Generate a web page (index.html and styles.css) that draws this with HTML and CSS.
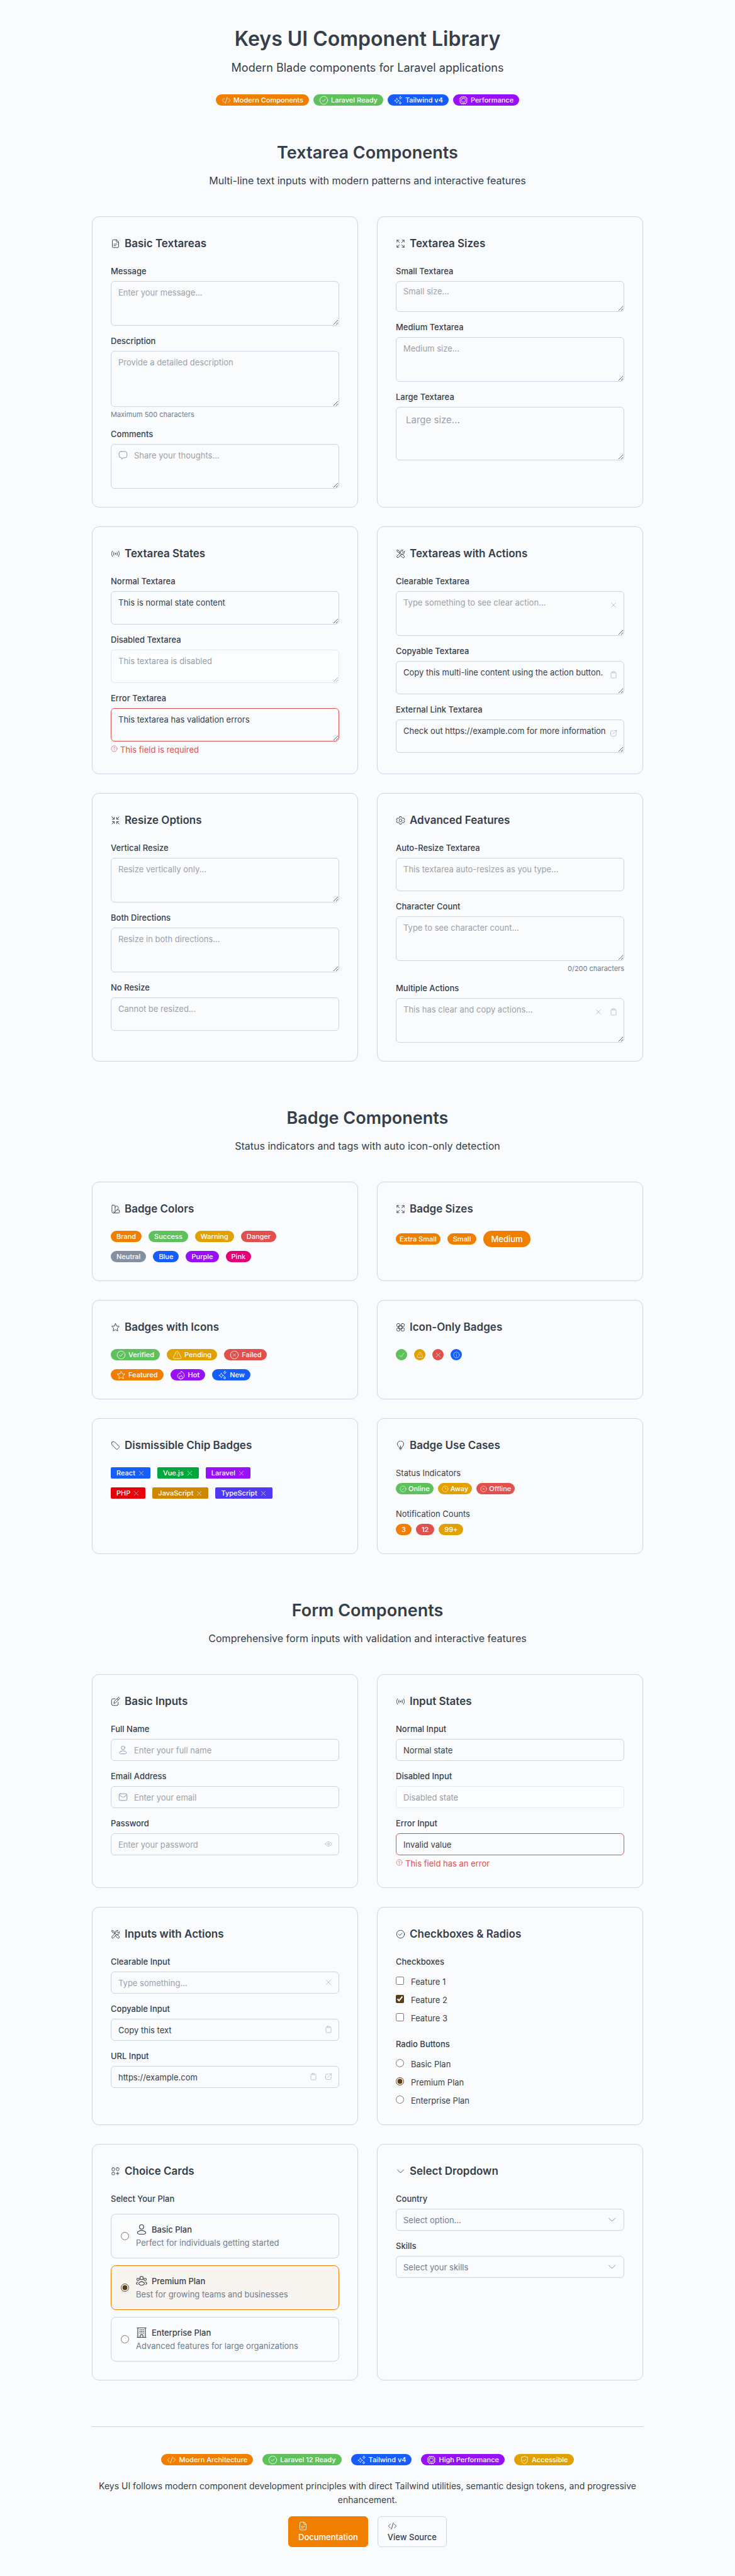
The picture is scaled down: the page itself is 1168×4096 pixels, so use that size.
FILE: index.html
```html
<!DOCTYPE html>
<html lang="en">
<head>
<meta charset="utf-8">
<meta name="viewport" content="width=device-width, initial-scale=1">
<title>Keys UI Component Library</title>
<link rel="stylesheet" href="styles.css">
</head>
<body>
<svg class="sprite" aria-hidden="true">
  <symbol id="code" viewBox="0 0 24 24"><path d="M17 7l2 2c1.500 1.500 3 2.300 3 3s-1.500 1.500-3 3l-2 2M7 7L5 9c-1.500 1.500-3 2.300-3 3s1.500 1.500 3 3l2 2M14.500 4l-5 16"/></symbol>
  <symbol id="check-circle" viewBox="0 0 24 24"><circle cx="12" cy="12" r="10"/><path d="M8 12.500l2.500 2.500L16 9"/></symbol>
  <symbol id="x-circle" viewBox="0 0 24 24"><circle cx="12" cy="12" r="10"/><path d="M14.500 9.500l-5 5M9.500 9.500l5 5"/></symbol>
  <symbol id="clock" viewBox="0 0 24 24"><circle cx="12" cy="12" r="10"/><path d="M12 7v5h4"/></symbol>
  <symbol id="info" viewBox="0 0 24 24"><circle cx="12" cy="12" r="10"/><path d="M12 17v-5.500h-1M12 8v.1"/></symbol>
  <symbol id="help" viewBox="0 0 24 24"><circle cx="12" cy="12" r="10"/><path d="M9.500 9.500a2.500 2.500 0 1 1 3.900 2c-.8.600-1.400 1.100-1.400 2M12 17v.1"/></symbol>
  <symbol id="sparkles" viewBox="0 0 24 24"><path d="M9 7c1 3.600 2.400 5 6 6-3.600 1-5 2.400-6 6-1-3.600-2.400-5-6-6 3.600-1 5-2.400 6-6ZM18 2c.5 2 1.500 3 3.500 3.500C19.500 6 18.500 7 18 9c-.5-2-1.500-3-3.500-3.500C16.500 5 17.500 4 18 2ZM17.500 16c.4 1.800 1.200 2.600 3 3-1.800.4-2.600 1.200-3 3-.4-1.800-1.200-2.600-3-3 1.800-.4 2.600-1.200 3-3Z"/></symbol>
  <symbol id="cpu" viewBox="0 0 24 24"><rect x="4" y="4" width="16" height="16" rx="3"/><rect x="7.500" y="7.500" width="9" height="9" rx="1"/><path d="M8 2v2M12 2v2M16 2v2M8 20v2M12 20v2M16 20v2M2 8h2M2 12h2M2 16h2M20 8h2M20 12h2M20 16h2"/></symbol>
  <symbol id="shield" viewBox="0 0 24 24"><path d="M12 2.500c2.500 1.800 5 2.500 8 2.500.8 8-1.500 14-8 17C5.500 19 3.200 13 4 5c3 0 5.500-.7 8-2.500ZM8.500 12.500l2.500 2.500 4.500-5.500"/></symbol>
  <symbol id="file" viewBox="0 0 24 24"><path d="M14 2H7a3 3 0 0 0-3 3v14a3 3 0 0 0 3 3h10a3 3 0 0 0 3-3V8ZM14 2v4a2 2 0 0 0 2 2h4M8 17h5M8 13h8"/></symbol>
  <symbol id="expand" viewBox="0 0 24 24"><path d="M3 8V3h5M3 3l6 6M16 3h5v5M21 3l-6 6M3 16v5h5M3 21l6-6M16 21h5v-5M21 21l-6-6"/></symbol>
  <symbol id="shrink" viewBox="0 0 24 24"><path d="M9 4v5H4M9 9L3 3M15 4v5h5M15 9l6-6M9 20v-5H4M9 15l-6 6M15 20v-5h5M15 15l6 6"/></symbol>
  <symbol id="comment" viewBox="0 0 24 24"><path d="M7 3h10a5 5 0 0 1 5 5v6a5 5 0 0 1-5 5h-4l-4.500 3.500V19H7a5 5 0 0 1-5-5V8a5 5 0 0 1 5-5Z"/></symbol>
  <symbol id="signal" viewBox="0 0 24 24"><circle cx="12" cy="12" r="1.500"/><path d="M8 8c-1.300 2.500-1.300 5.500 0 8M16 8c1.300 2.500 1.300 5.500 0 8M4.500 5c-3 4-3 10 0 14M19.500 5c3 4 3 10 0 14"/></symbol>
  <symbol id="tools" viewBox="0 0 24 24"><path d="M2.500 3.500l2-1.500 4 3 .5 2.500 3 3M2.500 3.500L5 8l2.800.8 3 3M13.500 13.500l1.500-1.500 6 5.500a2.700 2.700 0 0 1-4 4L11.500 15.500l2-2ZM21.500 6L18 9l-3-3 3-3.500a5.500 5.500 0 0 0-6.500 7L3 17.800A2.600 2.600 0 0 0 6.500 21.500L14.500 13a5.500 5.500 0 0 0 7-7Z"/></symbol>
  <symbol id="cog" viewBox="0 0 24 24"><circle cx="12" cy="12" r="3.500"/><path d="M10 2.500h4l1 3 2.500 1.400 3.100-.6 2 3.500L20.500 12l2.100 2.200-2 3.500-3.100-.6L15 18.500l-1 3h-4l-1-3-2.500-1.400-3.100.6-2-3.500L3.500 12 1.400 9.800l2-3.500 3.100.6L9 5.500Z"/></symbol>
  <symbol id="swatch" viewBox="0 0 24 24"><path d="M5 2h4a2 2 0 0 1 2 2v14a4 4 0 0 1-8 0V4a2 2 0 0 1 2-2ZM11 7l3-2.500a2 2 0 0 1 2.800.2l2.500 3.200a2 2 0 0 1-.2 2.700L10 20M7 22h13a2 2 0 0 0 2-2v-4a2 2 0 0 0-2-2h-4M7 18v.1"/></symbol>
  <symbol id="star" viewBox="0 0 24 24"><path d="M12 2.500l2.900 6.200 6.600.9-4.800 4.700 1.200 6.900L12 18l-5.900 3.200 1.200-6.900L2.500 9.600l6.600-.9Z"/></symbol>
  <symbol id="grid" viewBox="0 0 24 24"><rect x="2.500" y="2.500" width="8" height="8" rx="3"/><rect x="13.500" y="2.500" width="8" height="8" rx="3"/><rect x="2.500" y="13.500" width="8" height="8" rx="3"/><rect x="13.500" y="13.500" width="8" height="8" rx="3"/><path d="M8 8h8v8H8Z"/></symbol>
  <symbol id="grid-plus" viewBox="0 0 24 24"><rect x="3" y="3" width="7" height="7" rx="2.500"/><rect x="14" y="3" width="7" height="7" rx="2.500"/><rect x="3" y="14" width="7" height="7" rx="2.500"/><path d="M17.500 14v7M14 17.500h7"/></symbol>
  <symbol id="tag" viewBox="0 0 24 24"><path d="M3 3.500C4.500 2 9 1.800 10.500 3.300l10 10c1.700 1.700 1.700 2.700 0 4.400l-2.800 2.800c-1.700 1.700-2.700 1.700-4.400 0l-10-10C1.800 9 1.700 5 3 3.500Z"/></symbol>
  <symbol id="bulb" viewBox="0 0 24 24"><path d="M8.500 17c-.3-1.500-1-2-2.200-3.200a8 8 0 1 1 11.400 0C16.500 15 15.800 15.500 15.500 17ZM9.500 20h5M11 22.500h2M12 17v-4"/></symbol>
  <symbol id="alert" viewBox="0 0 24 24"><path d="M10.200 3.500c.8-1.300 2.800-1.300 3.600 0l8 14.200c.8 1.500-.1 3.300-1.900 3.300H4.100c-1.800 0-2.700-1.800-1.900-3.300ZM12 9v4M12 16.500v.1"/></symbol>
  <symbol id="fire" viewBox="0 0 24 24"><path d="M12 22a8.500 8.500 0 0 0 8.500-8.500C20.500 9 18 5 12.500 2c.3 3-.5 5-2.500 6.500C9.500 7.500 8.800 6.800 8 6.500 7 9 3.500 10 3.500 14A8.500 8.500 0 0 0 12 22ZM12 22a4 4 0 0 1-4-4c0-2 1-3 2-4 .5 1 1 1.500 2 1.500 1-.5 1.500-1.500 1.500-3 2 1.500 2.500 3.500 2.500 5.500a4 4 0 0 1-4 4Z"/></symbol>
  <symbol id="check" viewBox="0 0 24 24"><path d="M4 13.500L9 19 20 5"/></symbol>
  <symbol id="x" viewBox="0 0 24 24"><path d="M19 5L5 19M5 5l14 14"/></symbol>
  <symbol id="clipboard" viewBox="0 0 24 24"><path d="M8 4H7a3 3 0 0 0-3 3v12a3 3 0 0 0 3 3h10a3 3 0 0 0 3-3V7a3 3 0 0 0-3-3h-1"/><rect x="8" y="2" width="8" height="4" rx="1.500"/></symbol>
  <symbol id="external" viewBox="0 0 24 24"><path d="M11 4H7a4 4 0 0 0-4 4v9a4 4 0 0 0 4 4h9a4 4 0 0 0 4-4v-4M9.500 14.500L21 3M15 3h6v6"/></symbol>
  <symbol id="edit" viewBox="0 0 24 24"><path d="M11 5H6a4 4 0 0 0-4 4v9a4 4 0 0 0 4 4h9a4 4 0 0 0 4-4v-4M8 16l1-4.500 9.500-9a2 2 0 0 1 3 3L12.500 15ZM16 5l3 3"/></symbol>
  <symbol id="user" viewBox="0 0 24 24"><circle cx="12" cy="6.500" r="4.500"/><path d="M6.600 15.500c-1.400.8-5.100 2.500-2.900 4.700C4.800 21.200 6 22 7.600 22h8.800c1.600 0 2.800-.8 3.900-1.800 2.200-2.200-1.500-3.900-2.900-4.700a10.500 10.500 0 0 0-10.800 0Z"/></symbol>
  <symbol id="users" viewBox="0 0 24 24"><circle cx="12" cy="5.500" r="3.500"/><circle cx="4.500" cy="8.500" r="2.500"/><circle cx="19.500" cy="8.500" r="2.500"/><path d="M8 14.500c-1 .7-3 2-1.500 4 1.500 2.300 3 2.500 5.500 2.500s4-.2 5.500-2.500c1.500-2-.5-3.300-1.500-4-2.300-1.600-5.700-1.600-8 0ZM4 14c-2 .5-3 2-3 3 0 1.200 1 2 2.500 2M20 14c2 .5 3 2 3 3 0 1.200-1 2-2.500 2"/></symbol>
  <symbol id="building" viewBox="0 0 24 24"><path d="M2.500 22h19M4 22V2M20 22V2M2.500 2h19M9 22v-3.500a2 2 0 0 1 2-2h2a2 2 0 0 1 2 2V22M8 6h1.500M11.500 6h1.500M15 6h1.500M8 9.500h1.500M11.500 9.500h1.500M15 9.500h1.500M8 13h1.500M11.500 13h1.500M15 13h1.500"/></symbol>
  <symbol id="mail" viewBox="0 0 24 24"><rect x="2" y="3.500" width="20" height="17" rx="3"/><path d="M2.500 6.500l6.500 4.500c2.500 1.500 3.500 1.500 6 0l6.500-4.500"/></symbol>
  <symbol id="eye" viewBox="0 0 24 24"><path d="M2 12c2-4 5.500-7 10-7s8 3 10 7c-2 4-5.500 7-10 7s-8-3-10-7Z"/><circle cx="12" cy="12" r="3"/></symbol>
  <symbol id="chevron" viewBox="0 0 24 24"><path d="M4 8l8 8 8-8"/></symbol>
</svg>

<main class="page">
  <header class="hero">
    <h1>Keys UI Component Library</h1>
    <p>Modern Blade components for Laravel applications</p>
    <div class="badges tight">
      <span class="badge orange"><svg class="icon"><use href="#code"/></svg>Modern Components</span>
      <span class="badge green"><svg class="icon"><use href="#check-circle"/></svg>Laravel Ready</span>
      <span class="badge blue"><svg class="icon"><use href="#sparkles"/></svg>Tailwind v4</span>
      <span class="badge purple"><svg class="icon"><use href="#cpu"/></svg>Performance</span>
    </div>
  </header>

  <section>
    <h2>Textarea Components</h2>
    <p class="lead">Multi-line text inputs with modern patterns and interactive features</p>
    <div class="grid">
      <article class="card">
        <h3><svg class="icon"><use href="#file"/></svg>Basic Textareas</h3>
        <div class="stack">
          <div class="field"><label for="message">Message</label><textarea id="message" rows="3" placeholder="Enter your message..."></textarea></div>
          <div class="field"><label for="description">Description</label><textarea id="description" rows="4" placeholder="Provide a detailed description"></textarea><p class="hint">Maximum 500 characters</p></div>
          <div class="field"><label for="comments">Comments</label><div class="control"><svg class="icon lead-icon"><use href="#comment"/></svg><textarea id="comments" class="has-icon" rows="3" placeholder="Share your thoughts..."></textarea></div></div>
        </div>
      </article>
      <article class="card">
        <h3><svg class="icon"><use href="#expand"/></svg>Textarea Sizes</h3>
        <div class="stack">
          <div class="field"><label for="ta-small">Small Textarea</label><textarea id="ta-small" class="small" rows="2" placeholder="Small size..."></textarea></div>
          <div class="field"><label for="ta-medium">Medium Textarea</label><textarea id="ta-medium" rows="3" placeholder="Medium size..."></textarea></div>
          <div class="field"><label for="ta-large">Large Textarea</label><textarea id="ta-large" class="large" rows="3" placeholder="Large size..."></textarea></div>
        </div>
      </article>
      <article class="card">
        <h3><svg class="icon"><use href="#signal"/></svg>Textarea States</h3>
        <div class="stack">
          <div class="field"><label for="ta-normal">Normal Textarea</label><textarea id="ta-normal" rows="2">This is normal state content</textarea></div>
          <div class="field"><label for="ta-disabled">Disabled Textarea</label><textarea id="ta-disabled" rows="2" disabled>This textarea is disabled</textarea></div>
          <div class="field"><label for="ta-error">Error Textarea</label><textarea id="ta-error" class="invalid" rows="2">This textarea has validation errors</textarea><p class="error"><svg class="icon"><use href="#help"/></svg>This field is required</p></div>
        </div>
      </article>
      <article class="card">
        <h3><svg class="icon"><use href="#tools"/></svg>Textareas with Actions</h3>
        <div class="stack">
          <div class="field"><label for="ta-clear">Clearable Textarea</label><div class="control"><textarea id="ta-clear" class="has-actions" rows="3" placeholder="Type something to see clear action..."></textarea><div class="actions"><button type="button" aria-label="Clear"><svg class="icon"><use href="#x"/></svg></button></div></div></div>
          <div class="field"><label for="ta-copy">Copyable Textarea</label><div class="control"><textarea id="ta-copy" class="has-actions" rows="2">Copy this multi-line content using the action button.</textarea><div class="actions"><button type="button" aria-label="Copy"><svg class="icon"><use href="#clipboard"/></svg></button></div></div></div>
          <div class="field"><label for="ta-link">External Link Textarea</label><div class="control"><textarea id="ta-link" class="has-actions" rows="2">Check out https://example.com for more information</textarea><div class="actions"><button type="button" aria-label="Open link"><svg class="icon"><use href="#external"/></svg></button></div></div></div>
        </div>
      </article>
      <article class="card">
        <h3><svg class="icon"><use href="#shrink"/></svg>Resize Options</h3>
        <div class="stack">
          <div class="field"><label for="ta-vertical">Vertical Resize</label><textarea id="ta-vertical" rows="3" placeholder="Resize vertically only..."></textarea></div>
          <div class="field"><label for="ta-both">Both Directions</label><textarea id="ta-both" class="resize-both" rows="3" placeholder="Resize in both directions..."></textarea></div>
          <div class="field"><label for="ta-none">No Resize</label><textarea id="ta-none" class="resize-none" rows="2" placeholder="Cannot be resized..."></textarea></div>
        </div>
      </article>
      <article class="card">
        <h3><svg class="icon"><use href="#cog"/></svg>Advanced Features</h3>
        <div class="stack">
          <div class="field"><label for="ta-auto">Auto-Resize Textarea</label><textarea id="ta-auto" class="resize-none" rows="2" placeholder="This textarea auto-resizes as you type..."></textarea></div>
          <div class="field"><label for="ta-count">Character Count</label><textarea id="ta-count" rows="3" placeholder="Type to see character count..."></textarea><p class="hint end">0/200 characters</p></div>
          <div class="field"><label for="ta-multi">Multiple Actions</label><div class="control"><textarea id="ta-multi" class="has-actions" rows="3" placeholder="This has clear and copy actions..."></textarea><div class="actions"><button type="button" aria-label="Clear"><svg class="icon"><use href="#x"/></svg></button><button type="button" aria-label="Copy"><svg class="icon"><use href="#clipboard"/></svg></button></div></div></div>
        </div>
      </article>
    </div>
  </section>

  <section>
    <h2>Badge Components</h2>
    <p class="lead">Status indicators and tags with auto icon-only detection</p>
    <div class="grid">
      <article class="card">
        <h3><svg class="icon"><use href="#swatch"/></svg>Badge Colors</h3>
        <div class="badge-rows">
          <div class="badges"><span class="badge orange">Brand</span><span class="badge green">Success</span><span class="badge amber">Warning</span><span class="badge red">Danger</span></div>
          <div class="badges"><span class="badge neutral">Neutral</span><span class="badge blue">Blue</span><span class="badge purple">Purple</span><span class="badge pink">Pink</span></div>
        </div>
      </article>
      <article class="card">
        <h3><svg class="icon"><use href="#expand"/></svg>Badge Sizes</h3>
        <div class="badges"><span class="badge xs orange">Extra Small</span><span class="badge orange">Small</span><span class="badge md orange">Medium</span></div>
      </article>
      <article class="card">
        <h3><svg class="icon"><use href="#star"/></svg>Badges with Icons</h3>
        <div class="badge-rows">
          <div class="badges"><span class="badge green"><svg class="icon"><use href="#check-circle"/></svg>Verified</span><span class="badge amber"><svg class="icon"><use href="#alert"/></svg>Pending</span><span class="badge red"><svg class="icon"><use href="#x-circle"/></svg>Failed</span></div>
          <div class="badges"><span class="badge orange"><svg class="icon"><use href="#star"/></svg>Featured</span><span class="badge purple"><svg class="icon"><use href="#fire"/></svg>Hot</span><span class="badge blue"><svg class="icon"><use href="#sparkles"/></svg>New</span></div>
        </div>
      </article>
      <article class="card">
        <h3><svg class="icon"><use href="#grid"/></svg>Icon-Only Badges</h3>
        <div class="badges"><span class="badge dot green"><svg class="icon"><use href="#check"/></svg></span><span class="badge dot amber"><svg class="icon"><use href="#alert"/></svg></span><span class="badge dot red"><svg class="icon"><use href="#x"/></svg></span><span class="badge dot blue"><svg class="icon"><use href="#info"/></svg></span></div>
      </article>
      <article class="card">
        <h3><svg class="icon"><use href="#tag"/></svg>Dismissible Chip Badges</h3>
        <div class="badge-rows">
          <div class="badges"><span class="badge chip blue">React<button type="button" aria-label="Remove React"><svg class="icon"><use href="#x"/></svg></button></span><span class="badge chip vue">Vue.js<button type="button" aria-label="Remove Vue.js"><svg class="icon"><use href="#x"/></svg></button></span><span class="badge chip purple">Laravel<button type="button" aria-label="Remove Laravel"><svg class="icon"><use href="#x"/></svg></button></span></div>
          <div class="badges"><span class="badge chip php">PHP<button type="button" aria-label="Remove PHP"><svg class="icon"><use href="#x"/></svg></button></span><span class="badge chip js">JavaScript<button type="button" aria-label="Remove JavaScript"><svg class="icon"><use href="#x"/></svg></button></span><span class="badge chip ts">TypeScript<button type="button" aria-label="Remove TypeScript"><svg class="icon"><use href="#x"/></svg></button></span></div>
        </div>
      </article>
      <article class="card">
        <h3><svg class="icon"><use href="#bulb"/></svg>Badge Use Cases</h3>
        <div class="cases">
          <div class="field"><p class="caption">Status Indicators</p><div class="badges tight"><span class="badge xs green"><svg class="icon"><use href="#check-circle"/></svg>Online</span><span class="badge xs amber"><svg class="icon"><use href="#clock"/></svg>Away</span><span class="badge xs red"><svg class="icon"><use href="#x-circle"/></svg>Offline</span></div></div>
          <div class="field"><p class="caption">Notification Counts</p><div class="badges tight"><span class="badge orange">3</span><span class="badge red">12</span><span class="badge amber">99+</span></div></div>
        </div>
      </article>
    </div>
  </section>

  <section>
    <h2>Form Components</h2>
    <p class="lead">Comprehensive form inputs with validation and interactive features</p>
    <div class="grid">
      <article class="card">
        <h3><svg class="icon"><use href="#edit"/></svg>Basic Inputs</h3>
        <div class="stack">
          <div class="field"><label for="name">Full Name</label><div class="control"><svg class="icon lead-icon"><use href="#user"/></svg><input id="name" class="has-icon" type="text" placeholder="Enter your full name"></div></div>
          <div class="field"><label for="email">Email Address</label><div class="control"><svg class="icon lead-icon"><use href="#mail"/></svg><input id="email" class="has-icon" type="email" placeholder="Enter your email"></div></div>
          <div class="field"><label for="password">Password</label><div class="control"><input id="password" type="password" placeholder="Enter your password"><div class="actions middle"><button type="button" aria-label="Show password"><svg class="icon"><use href="#eye"/></svg></button></div></div></div>
        </div>
      </article>
      <article class="card">
        <h3><svg class="icon"><use href="#signal"/></svg>Input States</h3>
        <div class="stack">
          <div class="field"><label for="in-normal">Normal Input</label><input id="in-normal" type="text" value="Normal state"></div>
          <div class="field"><label for="in-disabled">Disabled Input</label><input id="in-disabled" type="text" value="Disabled state" disabled></div>
          <div class="field"><label for="in-error">Error Input</label><input id="in-error" class="invalid" type="text" value="Invalid value"><p class="error"><svg class="icon"><use href="#help"/></svg>This field has an error</p></div>
        </div>
      </article>
      <article class="card">
        <h3><svg class="icon"><use href="#tools"/></svg>Inputs with Actions</h3>
        <div class="stack">
          <div class="field"><label for="in-clear">Clearable Input</label><div class="control"><input id="in-clear" type="text" placeholder="Type something..."><div class="actions middle"><button type="button" aria-label="Clear"><svg class="icon"><use href="#x"/></svg></button></div></div></div>
          <div class="field"><label for="in-copy">Copyable Input</label><div class="control"><input id="in-copy" type="text" value="Copy this text"><div class="actions middle"><button type="button" aria-label="Copy"><svg class="icon"><use href="#clipboard"/></svg></button></div></div></div>
          <div class="field"><label for="in-url">URL Input</label><div class="control"><input id="in-url" type="url" value="https://example.com"><div class="actions middle"><button type="button" aria-label="Copy"><svg class="icon"><use href="#clipboard"/></svg></button><button type="button" aria-label="Open link"><svg class="icon"><use href="#external"/></svg></button></div></div></div>
        </div>
      </article>
      <article class="card">
        <h3><svg class="icon"><use href="#check-circle"/></svg>Checkboxes &amp; Radios</h3>
        <div class="option-groups">
          <fieldset class="options"><legend>Checkboxes</legend>
            <label class="option"><input type="checkbox">Feature 1</label>
            <label class="option"><input type="checkbox" checked>Feature 2</label>
            <label class="option"><input type="checkbox">Feature 3</label>
          </fieldset>
          <fieldset class="options"><legend>Radio Buttons</legend>
            <label class="option"><input type="radio" name="plan">Basic Plan</label>
            <label class="option"><input type="radio" name="plan" checked>Premium Plan</label>
            <label class="option"><input type="radio" name="plan">Enterprise Plan</label>
          </fieldset>
        </div>
      </article>
      <article class="card">
        <h3><svg class="icon"><use href="#grid-plus"/></svg>Choice Cards</h3>
        <fieldset class="choices"><legend>Select Your Plan</legend>
          <label class="choice"><input type="radio" name="choice"><span class="choice-body"><span class="choice-title"><svg class="icon"><use href="#user"/></svg>Basic Plan</span><span class="choice-text">Perfect for individuals getting started</span></span></label>
          <label class="choice"><input type="radio" name="choice" checked><span class="choice-body"><span class="choice-title"><svg class="icon"><use href="#users"/></svg>Premium Plan</span><span class="choice-text">Best for growing teams and businesses</span></span></label>
          <label class="choice"><input type="radio" name="choice"><span class="choice-body"><span class="choice-title"><svg class="icon"><use href="#building"/></svg>Enterprise Plan</span><span class="choice-text">Advanced features for large organizations</span></span></label>
        </fieldset>
      </article>
      <article class="card">
        <h3><svg class="icon"><use href="#chevron"/></svg>Select Dropdown</h3>
        <div class="stack">
          <div class="field"><label for="country">Country</label><div class="control"><select id="country"><option>Select option...</option></select><svg class="icon chevron"><use href="#chevron"/></svg></div></div>
          <div class="field"><label for="skills">Skills</label><div class="control"><select id="skills"><option>Select your skills</option></select><svg class="icon chevron"><use href="#chevron"/></svg></div></div>
        </div>
      </article>
    </div>
  </section>

  <footer>
    <div class="badges wide">
      <span class="badge orange"><svg class="icon"><use href="#code"/></svg>Modern Architecture</span>
      <span class="badge green"><svg class="icon"><use href="#check-circle"/></svg>Laravel 12 Ready</span>
      <span class="badge blue"><svg class="icon"><use href="#sparkles"/></svg>Tailwind v4</span>
      <span class="badge purple"><svg class="icon"><use href="#cpu"/></svg>High Performance</span>
      <span class="badge amber"><svg class="icon"><use href="#shield"/></svg>Accessible</span>
    </div>
    <p>Keys UI follows modern component development principles with direct Tailwind utilities, semantic design tokens, and progressive enhancement.</p>
    <div class="links">
      <button type="button" class="btn primary"><svg class="icon"><use href="#file"/></svg>Documentation</button>
      <button type="button" class="btn"><svg class="icon"><use href="#code"/></svg>View Source</button>
    </div>
  </footer>
</main>
</body>
</html>
```
FILE: styles.css
```css
:root {
  --bg: #f9fbfd;
  --line: #cbd5e1;
  --ink: #363e49;
  --muted: #6f7c8d;
  --placeholder: #9ca1a8;
  --brand: #f07f00;
  --danger: #e2504d;
}

*, *::before, *::after { box-sizing: border-box; }

body {
  margin: 0;
  background: var(--bg);
  color: var(--ink);
  font: 400 13px/18px Inter, "Liberation Sans", sans-serif;
}

h1, h2, h3, p, fieldset, legend { margin: 0; padding: 0; border: 0; }
button, input, textarea, select { font: inherit; color: inherit; margin: 0; }

.sprite { display: none; }

.icon {
  flex: none;
  display: block;
  width: 15px;
  height: 15px;
  fill: none;
  stroke: currentColor;
  stroke-width: 1.5;
  stroke-linecap: round;
  stroke-linejoin: round;
}

.page {
  max-width: 876px;
  margin: 0 auto;
  padding: 44px 0;
}

/* Headings */
.hero {
  display: flex;
  flex-direction: column;
  align-items: center;
  text-align: center;
  margin-bottom: 58px;
}
.hero h1 { font-size: 32px; line-height: 36px; font-weight: 600; }
.hero p { margin: 15px 0 29px; font-size: 18px; line-height: 26px; }

section { margin-bottom: 73px; text-align: center; }
h2 { font-size: 27px; line-height: 33px; font-weight: 600; }
.lead { margin: 15px 0 44px; font-size: 16px; line-height: 26px; }

/* Cards */
.grid {
  display: grid;
  grid-template-columns: repeat(2, minmax(0, 1fr));
  gap: 30px;
  text-align: left;
}
.card {
  padding: 29px;
  border: 1px solid var(--line);
  border-radius: 11px;
}
h3 {
  display: flex;
  align-items: center;
  gap: 7px;
  margin-bottom: 22px;
  font-size: 17px;
  line-height: 26px;
  font-weight: 600;
}

/* Fields */
.stack { display: flex; flex-direction: column; gap: 15px; }
.field { display: flex; flex-direction: column; }
.field > label { margin-bottom: 7px; font-weight: 500; }
.caption { margin-bottom: 7px; }
.cases { display: flex; flex-direction: column; gap: 22px; }

.control { position: relative; display: flex; }

textarea, select, input:not([type="checkbox"]):not([type="radio"]) {
  display: block;
  width: 100%;
  border: 1px solid var(--line);
  border-radius: 6px;
  background: var(--bg);
}
textarea { padding: 8px 11px 7px; resize: vertical; }
select, input:not([type="checkbox"]):not([type="radio"]) { height: 35px; padding: 0 11px; }
select { appearance: none; color: var(--muted); }

textarea.small { padding: 6px 11px 5px; }
textarea.large { padding: 9px 15px 8px; font-size: 15px; line-height: 22px; }
textarea.has-actions { padding-right: 24px; }
textarea.resize-both { resize: both; }
textarea.resize-none { resize: none; }
.control > textarea.has-icon, .control > input.has-icon { padding-left: 36px; }

textarea.invalid, input.invalid { border-color: var(--danger) !important; }
textarea:disabled, input:disabled { background: #fff !important; opacity: 0.5; }
::placeholder { color: var(--placeholder); opacity: 1; }

.lead-icon { position: absolute; left: 12px; top: 10px; color: #8593a6; }
.chevron { position: absolute; right: 12px; top: 10px; color: #7f8b9b; pointer-events: none; }

.actions { position: absolute; top: 10px; right: 5px; display: flex; }
.actions.middle { top: 5px; }
.actions button {
  display: grid;
  place-items: center;
  width: 24px;
  height: 24px;
  padding: 0;
  border: 0;
  background: none;
  color: #a7b2c1;
}
.actions .icon { width: 12px; height: 12px; }

.hint { margin-top: 5px; font-size: 11px; line-height: 14px; color: var(--muted); }
.hint.end { text-align: right; }
.error { display: flex; gap: 4px; margin-top: 4px; color: var(--danger); }
.error .icon { width: 11px; height: 11px; margin-top: 2px; }

/* Badges */
.badge-rows { display: flex; flex-direction: column; gap: 14px; }
.badges { display: flex; flex-wrap: wrap; align-items: center; gap: 11px; }
.badges.tight { gap: 7px; }
.badges.wide { gap: 15px; justify-content: center; }

.badge {
  display: inline-flex;
  align-items: center;
  gap: 4px;
  height: 18px;
  padding: 0 9px;
  border-radius: 9px;
  font-size: 11px;
  line-height: 14px;
  font-weight: 500;
  color: #fff;
}
.badge .icon { opacity: 0.9; }
.badge.xs { padding: 0 6px; gap: 3px; }
.badge.xs .icon, .badge.dot .icon, .badge.chip .icon { width: 11px; height: 11px; }
.badge.md { height: 26px; padding: 0 12px; border-radius: 13px; font-size: 13px; }
.badge.dot { width: 18px; padding: 0; justify-content: center; }
.badge.chip { border-radius: 2px; }
.badge.chip button { padding: 0; border: 0; background: none; }

.orange { background: var(--brand); }
.green { background: #5fc15c; }
.amber { background: #e1a100; }
.red { background: var(--danger); }
.neutral { background: #8290a2; }
.blue { background: #155dfc; }
.purple { background: #9810fa; }
.pink { background: #e60076; }
.vue { background: #00a63e; }
.php { background: #e7000b; }
.js { background: #d08700; }
.ts { background: #4f39f6; }

/* Checkboxes, radios and choice cards */
input[type="checkbox"], input[type="radio"] {
  flex: none;
  width: 13px;
  height: 13px;
  accent-color: #5c3c14;
}
legend { font-weight: 500; }
.option-groups { display: flex; flex-direction: column; gap: 23px; }
.options { display: flex; flex-direction: column; gap: 11px; min-width: 0; }
.options legend { margin-bottom: 14px; }
.option { display: flex; gap: 11px; }
.option input { margin-top: 1px; }

.choices { display: flex; flex-direction: column; gap: 11px; min-width: 0; }
.choices legend { margin-bottom: 15px; }
.choice {
  display: flex;
  align-items: center;
  gap: 11px;
  padding: 15px;
  border: 1px solid var(--line);
  border-radius: 8px;
}
.choice:has(input:checked) { border-color: var(--brand); background: #f8f4ef; }
.choice-body { display: flex; flex-direction: column; gap: 3px; }
.choice-title { display: flex; align-items: center; gap: 7px; font-weight: 500; }
.choice-title .icon { width: 18px; height: 18px; }
.choice-text { color: var(--muted); }

/* Footer */
footer {
  padding-top: 43px;
  border-top: 1px solid var(--line);
  text-align: center;
}
footer p { margin: 22px 0 15px; font-size: 14px; line-height: 22px; }
.links { display: flex; justify-content: center; gap: 15px; }
.btn {
  display: flex;
  flex-direction: column;
  align-items: flex-start;
  justify-content: center;
  gap: 1px;
  height: 49px;
  padding: 0 15px;
  border: 1px solid var(--line);
  border-radius: 6px;
  background: var(--bg);
  font-weight: 500;
}
.btn.primary { border-color: var(--brand); background: var(--brand); color: #fff; }
```
